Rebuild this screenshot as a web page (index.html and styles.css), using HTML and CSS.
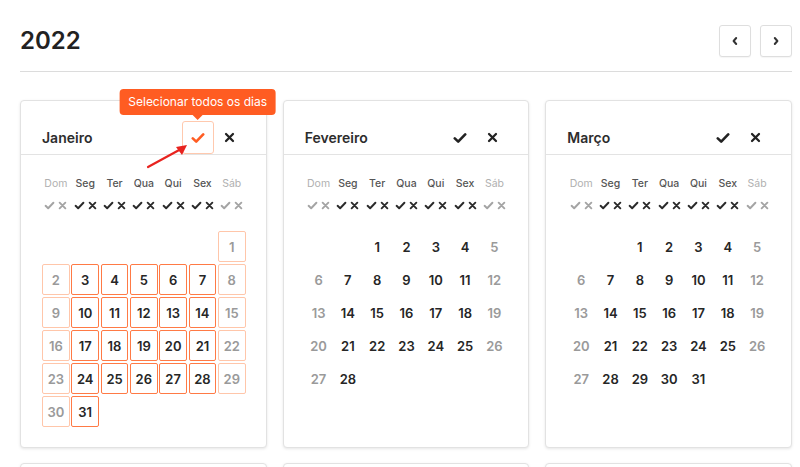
FILE: index.html
```html
<!DOCTYPE html>
<html lang="pt">
<head>
<meta charset="utf-8">
<title>2022</title>
<link rel="stylesheet" href="styles.css">
</head>
<body>
<svg class="sprite" width="0" height="0" aria-hidden="true">
  <defs>
    <symbol id="chk" viewBox="0 0 14 12"><path d="M1.8 6.4 L5.2 9.6 L12.2 2.4" fill="none" stroke="currentColor" stroke-width="2.6" stroke-linecap="round" stroke-linejoin="round"/></symbol>
    <symbol id="xx" viewBox="0 0 12 12"><path d="M2.2 2.2 L9.8 9.8 M9.8 2.2 L2.2 9.8" fill="none" stroke="currentColor" stroke-width="2.5" stroke-linecap="round"/></symbol>
  </defs>
</svg>
<div class="page">
  <header class="topbar">
    <h1 class="year">2022</h1>
    <div class="nav">
      <button class="navbtn"><svg viewBox="0 0 10 10" width="10" height="10"><path d="M6.2 2 L3.6 5 L6.2 8" fill="none" stroke="#333" stroke-width="2" stroke-linecap="round" stroke-linejoin="round"/></svg></button>
      <button class="navbtn"><svg viewBox="0 0 10 10" width="10" height="10"><path d="M3.8 2 L6.4 5 L3.8 8" fill="none" stroke="#333" stroke-width="2" stroke-linecap="round" stroke-linejoin="round"/></svg></button>
    </div>
  </header>

  <main class="months">
    <!-- Janeiro -->
    <section class="card">
      <div class="card-head">
        <h2 class="mname">Janeiro</h2>
        <div class="actions">
          <span class="act act-on">
            <span class="tip">Selecionar todos os dias</span>
            <svg class="ico-chk"><use href="#chk"/></svg>
          </span>
          <span class="act"><svg class="ico-x"><use href="#xx"/></svg></span>
        </div>
      </div>
      <svg class="annot" width="50" height="30" viewBox="0 0 50 30"><path d="M3 26 L36 8" stroke="#e8231f" stroke-width="2.2" stroke-linecap="round"/><path d="M42 4 L31 6 L37 14 Z" fill="#e8231f"/></svg>
      <div class="card-body">
        <div class="wk">
          <span class="off">Dom</span><span>Seg</span><span>Ter</span><span>Qua</span><span>Qui</span><span>Sex</span><span class="off">Sáb</span>
        </div>
        <div class="wk-acts">
          <span class="off"><svg class="s-chk"><use href="#chk"/></svg><svg class="s-x"><use href="#xx"/></svg></span>
          <span><svg class="s-chk"><use href="#chk"/></svg><svg class="s-x"><use href="#xx"/></svg></span>
          <span><svg class="s-chk"><use href="#chk"/></svg><svg class="s-x"><use href="#xx"/></svg></span>
          <span><svg class="s-chk"><use href="#chk"/></svg><svg class="s-x"><use href="#xx"/></svg></span>
          <span><svg class="s-chk"><use href="#chk"/></svg><svg class="s-x"><use href="#xx"/></svg></span>
          <span><svg class="s-chk"><use href="#chk"/></svg><svg class="s-x"><use href="#xx"/></svg></span>
          <span class="off"><svg class="s-chk"><use href="#chk"/></svg><svg class="s-x"><use href="#xx"/></svg></span>
        </div>
        <div class="days">
          <span></span><span></span><span></span><span></span><span></span><span></span><span class="d sel we">1</span>
          <span class="d sel we">2</span><span class="d sel">3</span><span class="d sel">4</span><span class="d sel">5</span><span class="d sel">6</span><span class="d sel">7</span><span class="d sel we">8</span>
          <span class="d sel we">9</span><span class="d sel">10</span><span class="d sel">11</span><span class="d sel">12</span><span class="d sel">13</span><span class="d sel">14</span><span class="d sel we">15</span>
          <span class="d sel we">16</span><span class="d sel">17</span><span class="d sel">18</span><span class="d sel">19</span><span class="d sel">20</span><span class="d sel">21</span><span class="d sel we">22</span>
          <span class="d sel we">23</span><span class="d sel">24</span><span class="d sel">25</span><span class="d sel">26</span><span class="d sel">27</span><span class="d sel">28</span><span class="d sel we">29</span>
          <span class="d sel we">30</span><span class="d sel">31</span>
        </div>
      </div>
    </section>

    <!-- Fevereiro -->
    <section class="card">
      <div class="card-head">
        <h2 class="mname">Fevereiro</h2>
        <div class="actions">
          <span class="act"><svg class="ico-chk"><use href="#chk"/></svg></span>
          <span class="act"><svg class="ico-x"><use href="#xx"/></svg></span>
        </div>
      </div>
      <div class="card-body">
        <div class="wk">
          <span class="off">Dom</span><span>Seg</span><span>Ter</span><span>Qua</span><span>Qui</span><span>Sex</span><span class="off">Sáb</span>
        </div>
        <div class="wk-acts">
          <span class="off"><svg class="s-chk"><use href="#chk"/></svg><svg class="s-x"><use href="#xx"/></svg></span>
          <span><svg class="s-chk"><use href="#chk"/></svg><svg class="s-x"><use href="#xx"/></svg></span>
          <span><svg class="s-chk"><use href="#chk"/></svg><svg class="s-x"><use href="#xx"/></svg></span>
          <span><svg class="s-chk"><use href="#chk"/></svg><svg class="s-x"><use href="#xx"/></svg></span>
          <span><svg class="s-chk"><use href="#chk"/></svg><svg class="s-x"><use href="#xx"/></svg></span>
          <span><svg class="s-chk"><use href="#chk"/></svg><svg class="s-x"><use href="#xx"/></svg></span>
          <span class="off"><svg class="s-chk"><use href="#chk"/></svg><svg class="s-x"><use href="#xx"/></svg></span>
        </div>
        <div class="days">
          <span></span><span></span><span class="d">1</span><span class="d">2</span><span class="d">3</span><span class="d">4</span><span class="d we">5</span>
          <span class="d we">6</span><span class="d">7</span><span class="d">8</span><span class="d">9</span><span class="d">10</span><span class="d">11</span><span class="d we">12</span>
          <span class="d we">13</span><span class="d">14</span><span class="d">15</span><span class="d">16</span><span class="d">17</span><span class="d">18</span><span class="d we">19</span>
          <span class="d we">20</span><span class="d">21</span><span class="d">22</span><span class="d">23</span><span class="d">24</span><span class="d">25</span><span class="d we">26</span>
          <span class="d we">27</span><span class="d">28</span>
        </div>
      </div>
    </section>

    <!-- Março -->
    <section class="card">
      <div class="card-head">
        <h2 class="mname">Março</h2>
        <div class="actions">
          <span class="act"><svg class="ico-chk"><use href="#chk"/></svg></span>
          <span class="act"><svg class="ico-x"><use href="#xx"/></svg></span>
        </div>
      </div>
      <div class="card-body">
        <div class="wk">
          <span class="off">Dom</span><span>Seg</span><span>Ter</span><span>Qua</span><span>Qui</span><span>Sex</span><span class="off">Sáb</span>
        </div>
        <div class="wk-acts">
          <span class="off"><svg class="s-chk"><use href="#chk"/></svg><svg class="s-x"><use href="#xx"/></svg></span>
          <span><svg class="s-chk"><use href="#chk"/></svg><svg class="s-x"><use href="#xx"/></svg></span>
          <span><svg class="s-chk"><use href="#chk"/></svg><svg class="s-x"><use href="#xx"/></svg></span>
          <span><svg class="s-chk"><use href="#chk"/></svg><svg class="s-x"><use href="#xx"/></svg></span>
          <span><svg class="s-chk"><use href="#chk"/></svg><svg class="s-x"><use href="#xx"/></svg></span>
          <span><svg class="s-chk"><use href="#chk"/></svg><svg class="s-x"><use href="#xx"/></svg></span>
          <span class="off"><svg class="s-chk"><use href="#chk"/></svg><svg class="s-x"><use href="#xx"/></svg></span>
        </div>
        <div class="days">
          <span></span><span></span><span class="d">1</span><span class="d">2</span><span class="d">3</span><span class="d">4</span><span class="d we">5</span>
          <span class="d we">6</span><span class="d">7</span><span class="d">8</span><span class="d">9</span><span class="d">10</span><span class="d">11</span><span class="d we">12</span>
          <span class="d we">13</span><span class="d">14</span><span class="d">15</span><span class="d">16</span><span class="d">17</span><span class="d">18</span><span class="d we">19</span>
          <span class="d we">20</span><span class="d">21</span><span class="d">22</span><span class="d">23</span><span class="d">24</span><span class="d">25</span><span class="d we">26</span>
          <span class="d we">27</span><span class="d">28</span><span class="d">29</span><span class="d">30</span><span class="d">31</span>
        </div>
      </div>
    </section>

    <section class="card card-next"></section>
    <section class="card card-next"></section>
    <section class="card card-next"></section>
  </main>
</div>
</body>
</html>
```

FILE: styles.css
```css
* { box-sizing: border-box; }

html, body {
  margin: 0;
  padding: 0;
  background: #fff;
  font-family: "Inter", "Liberation Sans", Arial, sans-serif;
  color: #333;
}

.sprite { position: absolute; width: 0; height: 0; overflow: hidden; }

.page {
  padding: 0 8px 0 20px;
}

.topbar {
  display: flex;
  justify-content: space-between;
  align-items: center;
  padding-top: 25px;
  padding-bottom: 14px;
  border-bottom: 1px solid #dcdcdc;
}

.year {
  margin: 0;
  font-size: 24px;
  line-height: 30px;
  font-weight: 600;
  color: #222;
}

.nav { display: flex; gap: 9px; }

.navbtn {
  width: 32px;
  height: 32px;
  padding: 0;
  border: 1px solid #dedede;
  border-radius: 3px;
  background: #fff;
  display: flex;
  align-items: center;
  justify-content: center;
  box-shadow: 0 1px 1px rgba(0,0,0,0.04);
}

.months {
  margin-top: 28px;
  display: grid;
  grid-template-columns: repeat(3, 1fr);
  column-gap: 16px;
  row-gap: 15px;
}

.card {
  position: relative;
  height: 348px;
  border: 1px solid #e2e2e2;
  border-radius: 4px;
  background: #fff;
  box-shadow: 0 1px 3px rgba(0,0,0,0.10);
}

.card-head {
  height: 54px;
  padding: 20px 20px 0 21px;
  display: flex;
  align-items: flex-end;
  justify-content: space-between;
  border-bottom: 1px solid #e3e3e3;
}

.mname {
  margin: 0;
  font-size: 14px;
  line-height: 33px;
  font-weight: 600;
  color: #2d2d2d;
}

.actions { display: flex; gap: 0; }

.act {
  position: relative;
  width: 32px;
  height: 33px;
  display: flex;
  align-items: center;
  justify-content: center;
  color: #222;
  border: 1px solid transparent;
  border-radius: 3px;
}

.act-on {
  border-color: #ffc9ae;
  color: #ff5c22;
}

.ico-chk { width: 14px; height: 12px; }
.ico-x { width: 11px; height: 11px; }

.tip {
  position: absolute;
  bottom: calc(100% + 7px);
  left: 50%;
  transform: translateX(-50%);
  white-space: nowrap;
  background: #ff5c22;
  color: #fff;
  font-size: 12px;
  font-weight: 400;
  line-height: 26px;
  padding: 0 9px;
  border-radius: 4px;
  z-index: 3;
}

.tip::after {
  content: "";
  position: absolute;
  top: 100%;
  left: 50%;
  margin-left: -5px;
  border: 5px solid transparent;
  border-top-color: #ff5c22;
  border-bottom-width: 0;
}

.annot {
  position: absolute;
  left: 124px;
  top: 40px;
  z-index: 2;
}

.card-body {
  padding: 22px 20px 0 21px;
}

.wk, .wk-acts, .days {
  display: grid;
  grid-template-columns: repeat(7, 1fr);
  column-gap: 1.5px;
}

.wk span {
  text-align: center;
  font-size: 10.5px;
  line-height: 14px;
  font-weight: 500;
  color: #555;
}

.wk span.off { color: #b0b0b0; font-weight: 400; }

.wk-acts { margin-top: 8px; }

.wk-acts span {
  display: flex;
  justify-content: center;
  align-items: center;
  gap: 3px;
  height: 12px;
  color: #2a2a2a;
}

.wk-acts span.off { color: #a4a4a4; }

.s-chk { width: 11px; height: 9px; }
.s-x { width: 9px; height: 9px; }

.days {
  margin-top: 20px;
  row-gap: 2px;
}

.d {
  height: 31px;
  display: flex;
  align-items: center;
  justify-content: center;
  font-size: 13px;
  font-weight: 600;
  color: #262626;
  border: 1px solid transparent;
  border-radius: 2px;
}

.d.we { color: #9a9a9a; }

.d.sel { border-color: #ff7a45; }
.d.sel.we { border-color: #ffc6aa; }
```
